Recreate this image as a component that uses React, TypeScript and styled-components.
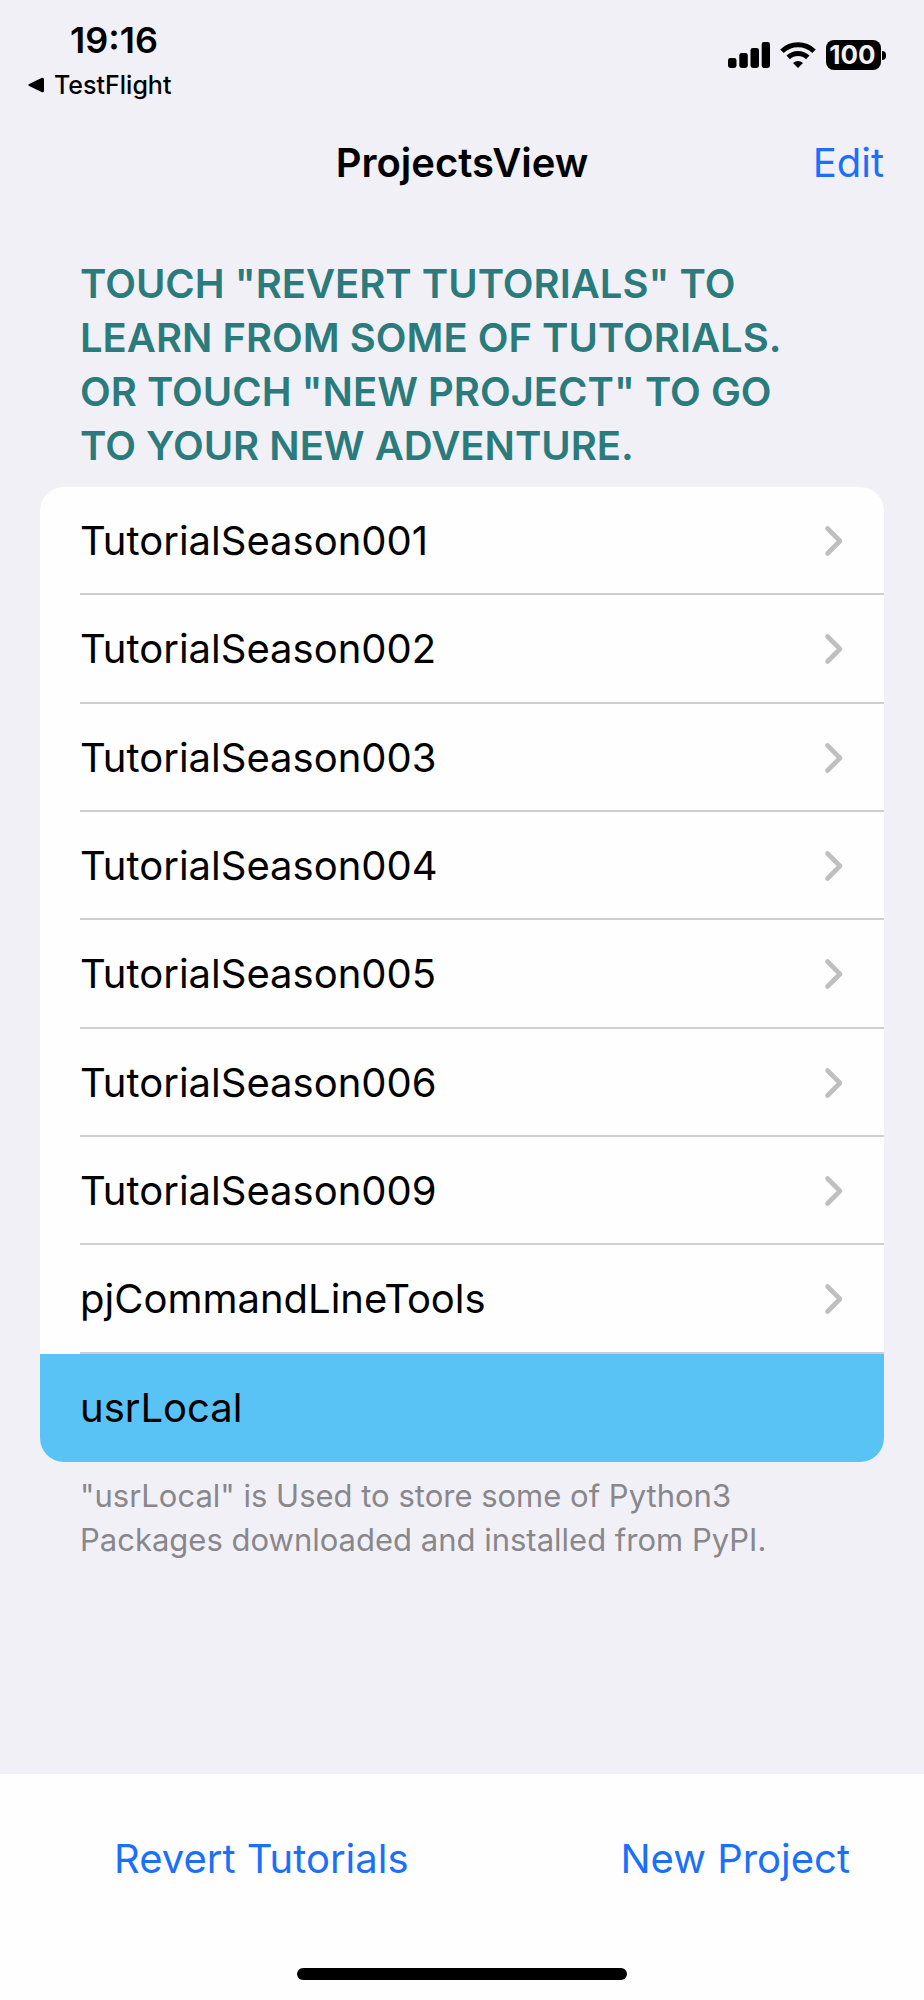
import React from "react";
import styled, { createGlobalStyle } from "styled-components";

const GlobalStyle = createGlobalStyle`
  *, *::before, *::after { box-sizing: border-box; }
  body {
    margin: 0;
    background: #f1f0f6;
    color: #000;
    font-family: Inter, "Liberation Sans", sans-serif;
    font-size: 40px;
  }
`;

const Screen = styled.div`
  display: flex;
  flex-direction: column;
  min-height: 100vh;
`;

const StatusBar = styled.header`
  display: flex;
  justify-content: space-between;
  padding: 20px 38px 0 28px;
`;

const StatusLeft = styled.div`
  display: flex;
  flex-direction: column;
`;

const Clock = styled.time`
  padding-left: 42px;
  font-size: 36px;
  font-weight: 600;
  line-height: 40px;
`;

const BackLink = styled.a`
  display: flex;
  align-items: center;
  gap: 10px;
  height: 50px;
  color: inherit;
  font-size: 25px;
  font-weight: 500;
  line-height: 32px;
  text-decoration: none;
`;

const StatusIcons = styled.div`
  display: flex;
  align-items: center;
  gap: 10px;
  height: 30px;
  margin-top: 20px;
`;

const Battery = styled.div`
  display: flex;
  align-items: center;
  gap: 1px;

  &::after {
    content: "";
    width: 4px;
    height: 9px;
    border-radius: 0 4px 4px 0;
    background: #000;
  }
`;

const BatteryLevel = styled.span`
  width: 55px;
  padding-right: 2px;
  border-radius: 8px;
  background: #000;
  color: #f1f0f6;
  font-size: 26px;
  font-weight: 700;
  line-height: 30px;
  text-align: center;
`;

const NavBar = styled.nav`
  display: grid;
  grid-template-columns: 1fr auto 1fr;
  align-items: center;
  height: 106px;
  padding: 0 40px;
`;

const Title = styled.h1`
  grid-column: 2;
  margin: 0;
  font-size: 40px;
  font-weight: 600;
  line-height: 54px;
`;

const TextButton = styled.button`
  padding: 0;
  border: 0;
  background: none;
  color: #1b70fa;
  font: inherit;
  line-height: 54px;
  cursor: pointer;
`;

const EditButton = styled(TextButton)`
  justify-self: end;
`;

const Content = styled.main`
  flex: 1;
  padding: 41px 40px;
`;

const SectionHeader = styled.h2`
  margin: 0;
  padding: 0 40px 14px;
  color: #2c7b7c;
  font-size: 40px;
  font-weight: 600;
  line-height: 54px;
  text-transform: uppercase;
`;

const TextLine = styled.span`
  display: block;
`;

const ProjectList = styled.ul`
  display: grid;
  grid-auto-rows: 1fr;
  min-height: 975px;
  margin: 0;
  padding: 0;
  overflow: hidden;
  border-radius: 24px;
  background: #fefefe;
  list-style: none;
`;

const ProjectItem = styled.li<{ $selected?: boolean }>`
  display: grid;
  padding-left: 40px;
  background: ${(p) => (p.$selected ? "#5ac3f5" : "transparent")};
`;

const ProjectLink = styled.a<{ $last?: boolean }>`
  display: flex;
  align-items: center;
  justify-content: space-between;
  padding-right: 40px;
  box-shadow: ${(p) => (p.$last ? "none" : "inset 0 -2px #cececf")};
  color: inherit;
  line-height: 54px;
  text-decoration: none;
`;

const SectionFooter = styled.p`
  margin: 0;
  padding: 12px 40px 0;
  color: #88878c;
  font-size: 31px;
  line-height: 44px;
`;

const Toolbar = styled.footer`
  display: flex;
  flex-direction: column;
  align-items: center;
  justify-content: space-between;
  height: 226px;
  padding: 58px 0 20px;
  background: #fefefe;
`;

const ToolbarActions = styled.div`
  display: flex;
  justify-content: space-between;
  width: 100%;
  padding: 0 74px 0 114px;
`;

const HomeIndicator = styled.div`
  width: 330px;
  height: 12px;
  border-radius: 6px;
  background: #000;
`;

const projects = [
  "TutorialSeason001",
  "TutorialSeason002",
  "TutorialSeason003",
  "TutorialSeason004",
  "TutorialSeason005",
  "TutorialSeason006",
  "TutorialSeason009",
  "pjCommandLineTools",
  "usrLocal",
];

const BackTriangle = () => (
  <svg width="16" height="16" viewBox="0 0 16 16" aria-hidden="true">
    <path d="M1.2 7 14 .8q2-.6 2 1.4v11.6q0 2-2 1.4L1.2 9q-1.8-1 0-2z" />
  </svg>
);

const SignalIcon = () => (
  <svg width="42" height="26" viewBox="0 0 42 26" aria-hidden="true">
    <rect x="0" y="16" width="8.5" height="10" rx="2.4" />
    <rect x="11.3" y="11" width="8.5" height="15" rx="2.4" />
    <rect x="22.5" y="6" width="8.5" height="20" rx="2.4" />
    <rect x="33.7" y="0" width="8.3" height="26" rx="2.4" />
  </svg>
);

const WifiIcon = () => (
  <svg width="36" height="26" viewBox="0 0 36 26" aria-hidden="true">
    <g fill="none" stroke="#000" strokeWidth="5">
      <path d="M2 9.2a23 23 0 0 1 32 0" />
      <path d="M8.2 15.4a14 14 0 0 1 19.6 0" />
    </g>
    <path d="M18 26l-5-5q5-4 10 0z" />
  </svg>
);

const Chevron = () => (
  <svg width="20" height="32" viewBox="0 0 20 32" aria-hidden="true">
    <path
      d="M3.5 3.5 16 16 3.5 28.5"
      fill="none"
      stroke="#bfbfc0"
      strokeWidth="4.6"
      strokeLinecap="round"
      strokeLinejoin="round"
    />
  </svg>
);

export default function App() {
  return (
    <Screen>
      <GlobalStyle />
      <StatusBar>
        <StatusLeft>
          <Clock>19:16</Clock>
          <BackLink href="#testflight">
            <BackTriangle />
            TestFlight
          </BackLink>
        </StatusLeft>
        <StatusIcons>
          <SignalIcon />
          <WifiIcon />
          <Battery>
            <BatteryLevel>100</BatteryLevel>
          </Battery>
        </StatusIcons>
      </StatusBar>
      <NavBar>
        <Title>ProjectsView</Title>
        <EditButton type="button">Edit</EditButton>
      </NavBar>
      <Content>
        <SectionHeader>
          <TextLine>Touch "Revert Tutorials" to</TextLine>
          <TextLine>learn from some of tutorials.</TextLine>
          <TextLine>Or touch "New Project" to go</TextLine>
          <TextLine>to your new adventure.</TextLine>
        </SectionHeader>
        <ProjectList>
          {projects.map((name, i) => {
            const last = i === projects.length - 1;
            return (
              <ProjectItem key={name} $selected={last}>
                <ProjectLink href={`#${name}`} $last={last}>
                  {name}
                  {!last && <Chevron />}
                </ProjectLink>
              </ProjectItem>
            );
          })}
        </ProjectList>
        <SectionFooter>
          <TextLine>"usrLocal" is Used to store some of Python3</TextLine>
          <TextLine>Packages downloaded and installed from PyPI.</TextLine>
        </SectionFooter>
      </Content>
      <Toolbar>
        <ToolbarActions>
          <TextButton type="button">Revert Tutorials</TextButton>
          <TextButton type="button">New Project</TextButton>
        </ToolbarActions>
        <HomeIndicator />
      </Toolbar>
    </Screen>
  );
}
